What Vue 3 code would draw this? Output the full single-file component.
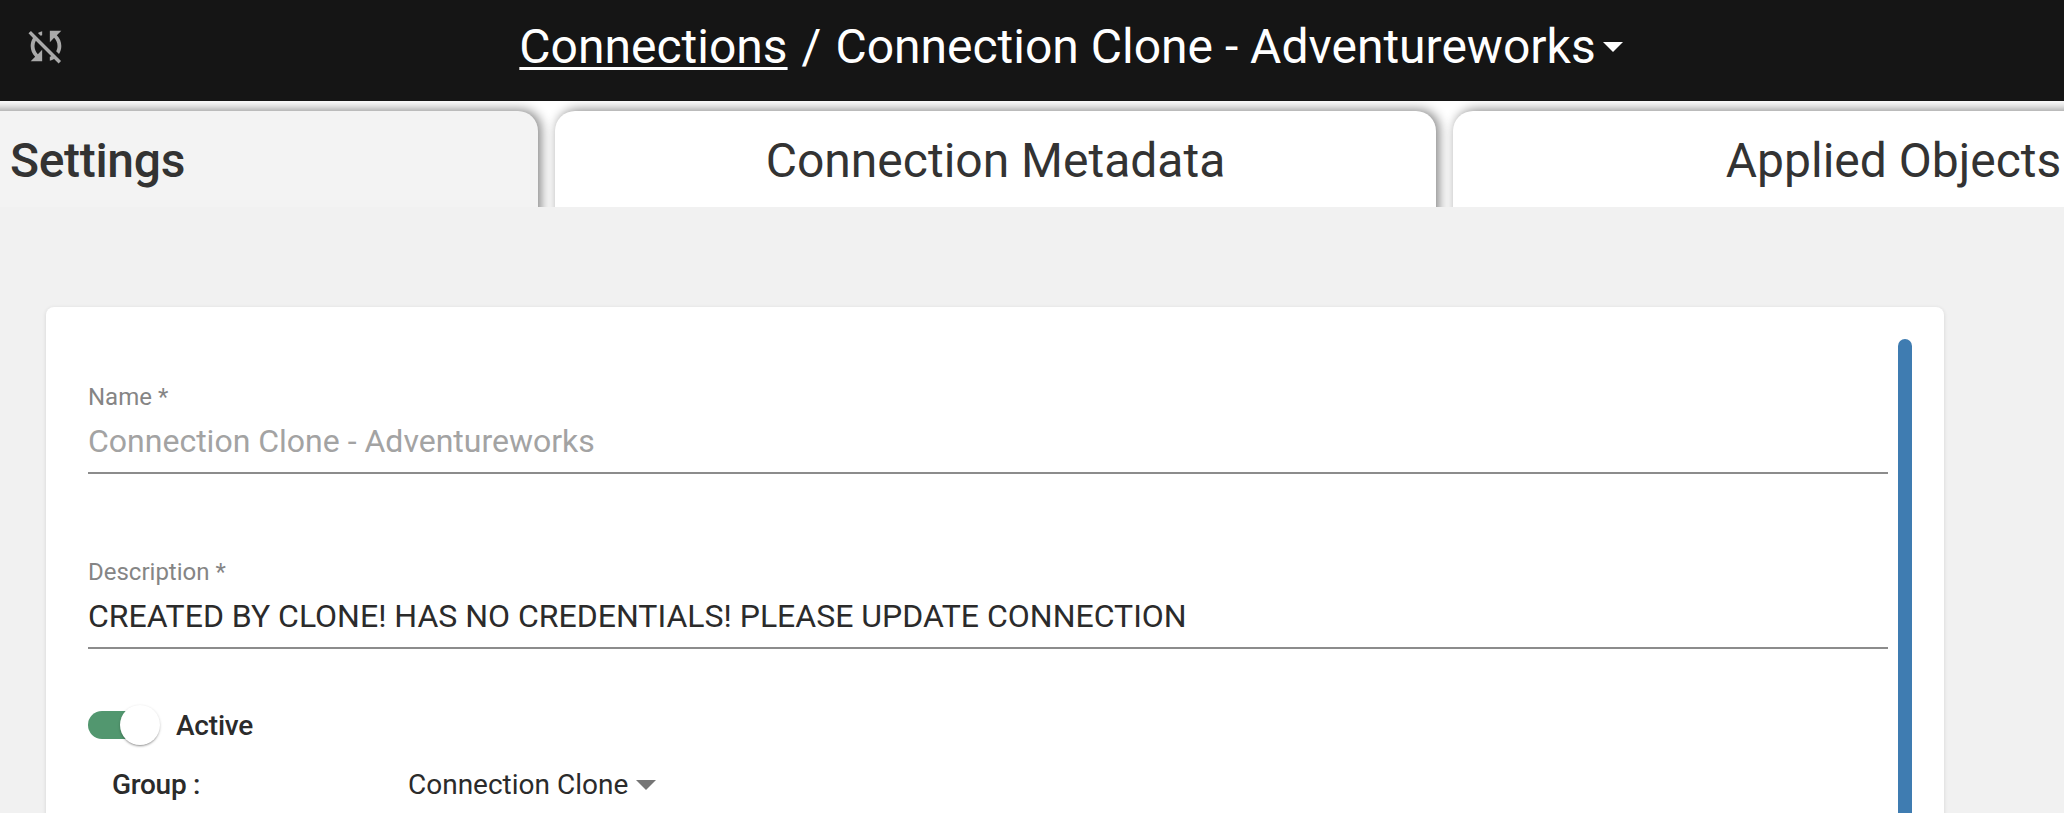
<script setup>
const tabs = [
  { label: 'Settings', active: true },
  { label: 'Connection Metadata', active: false },
  { label: 'Applied Objects', active: false }
]
</script>

<template>
  <div class="page">
    <header class="topbar">
      <svg class="sync" viewBox="0 0 24 24" aria-hidden="true">
        <path d="M10 6.35V4.26c-.8.21-1.55.54-2.23.96l1.46 1.46c.25-.12.5-.24.77-.33zm-7.14-.94l2.36 2.36C4.45 8.99 4 10.44 4 12c0 2.21.91 4.2 2.36 5.64L4 20h6v-6l-2.24 2.24C6.68 15.15 6 13.66 6 12c0-1 .25-1.94.68-2.77l8.08 8.08c-.25.13-.5.25-.77.34v2.09c.8-.21 1.55-.54 2.23-.96l2.36 2.36 1.27-1.27L4.14 4.14 2.86 5.41zM20 4h-6v6l2.24-2.24C17.32 8.85 18 10.34 18 12c0 1-.25 1.94-.68 2.77l1.46 1.46C19.55 15.01 20 13.56 20 12c0-2.21-.91-4.2-2.36-5.64L20 4z" />
      </svg>
      <div class="crumbs">
        <a class="crumb-link">Connections</a>
        <span class="sep">/</span>
        <span>Connection Clone - Adventureworks</span>
        <span class="crumb-caret"></span>
      </div>
    </header>

    <nav class="tabs">
      <div v-for="t in tabs" :key="t.label" class="tab" :class="{ active: t.active }">{{ t.label }}</div>
    </nav>

    <main class="content">
      <section class="card">
        <div class="form">
          <div class="field first">
            <label class="field-label">Name *</label>
            <div class="field-value muted">Connection Clone - Adventureworks</div>
          </div>
          <div class="field second">
            <label class="field-label">Description *</label>
            <div class="field-value">CREATED BY CLONE! HAS NO CREDENTIALS! PLEASE UPDATE CONNECTION</div>
          </div>
          <div class="switch-row">
            <span class="switch"><span class="track"></span><span class="thumb"></span></span>
            <span class="switch-label">Active</span>
          </div>
          <div class="group-row">
            <span class="group-label">Group :</span>
            <span class="group-value">Connection Clone</span>
            <span class="group-caret"></span>
          </div>
        </div>
        <div class="scrollbar"></div>
      </section>
    </main>
  </div>
</template>

<style scoped>
.page {
  width: 2064px;
  height: 813px;
  overflow: hidden;
  background: #f1f1f1;
  font-family: Roboto, "Liberation Sans", sans-serif;
  display: flex;
  flex-direction: column;
}
.topbar {
  height: 101px;
  flex: none;
  background: #151515;
  color: #fff;
  display: flex;
  align-items: center;
  justify-content: center;
  position: relative;
  padding-left: 78px;
  box-sizing: border-box;
}
.sync {
  position: absolute;
  left: 23px;
  top: 23px;
  width: 46px;
  height: 46px;
  fill: #aaa;
}
.crumbs {
  display: flex;
  align-items: center;
  font-size: 48px;
  font-weight: 400;
  line-height: 92px;
  margin-top: -8px;
}
.crumb-link {
  text-decoration: underline;
  text-underline-offset: 4px;
  text-decoration-thickness: 3px;
}
.sep {
  margin: 0 14px;
}
.crumb-caret {
  width: 0;
  height: 0;
  margin-left: 7px;
  margin-top: 1px;
  border-left: 10px solid transparent;
  border-right: 10px solid transparent;
  border-top: 10px solid #fff;
}
.tabs {
  height: 106px;
  flex: none;
  background: #fff;
  overflow: hidden;
  display: flex;
  gap: 17px;
  padding-top: 10px;
  box-sizing: border-box;
}
.tab {
  flex: none;
  width: 881px;
  height: 120px;
  background: #fff;
  border-radius: 20px 20px 0 0;
  box-shadow: 3px -1px 12px #808080;
  color: #333;
  font-size: 48px;
  line-height: 100px;
  text-align: center;
}
.tab.active {
  margin-left: -343px;
  background: #f3f3f3;
  font-weight: 500;
  letter-spacing: -0.3px;
}
.content {
  flex: 1;
  padding: 100px 120px 0 46px;
  min-height: 0;
}
.card {
  background: #fff;
  border-radius: 8px;
  box-shadow: 0 1px 4px rgba(0, 0, 0, 0.12);
  height: 600px;
  position: relative;
  padding: 0 56px 0 42px;
}
.field {
  border-bottom: 2px solid #8c8c8c;
}
.field.first {
  padding-top: 75px;
}
.field.second {
  margin-top: 83px;
}
.field-label {
  display: block;
  font-size: 24px;
  line-height: 30px;
  color: #858585;
}
.field-value {
  font-size: 32px;
  line-height: 44px;
  padding: 7px 0 9px;
  color: #2b2b2b;
}
.field-value.muted {
  color: #a3a3a3;
}
.switch-row {
  display: flex;
  align-items: center;
  margin-top: 56px;
  height: 40px;
}
.switch {
  position: relative;
  width: 72px;
  height: 40px;
  flex: none;
}
.track {
  position: absolute;
  left: 0;
  top: 6px;
  width: 68px;
  height: 28px;
  border-radius: 14px;
  background: #52976f;
}
.thumb {
  position: absolute;
  left: 32px;
  top: 0;
  width: 40px;
  height: 40px;
  border-radius: 50%;
  background: #fff;
  box-shadow: 0 2px 2px -1px rgba(0, 0, 0, 0.3), 0 1px 3px rgba(0, 0, 0, 0.2);
}
.switch-label {
  margin-left: 16px;
  font-size: 28px;
  font-weight: 500;
  letter-spacing: -0.2px;
  color: #2b2b2b;
}
.group-row {
  display: flex;
  align-items: center;
  margin-top: 23px;
  padding-left: 24px;
  font-size: 28px;
  color: #2b2b2b;
}
.group-label {
  width: 296px;
  font-weight: 500;
  letter-spacing: -0.3px;
}
.group-caret {
  width: 0;
  height: 0;
  margin-left: 8px;
  border-left: 10px solid transparent;
  border-right: 10px solid transparent;
  border-top: 10px solid #757575;
}
.scrollbar {
  position: absolute;
  left: 1852px;
  top: 32px;
  width: 14px;
  height: 600px;
  border-radius: 7px;
  background: #3f7cb1;
}
</style>

<style>
html, body { margin: 0; overflow: hidden; }
</style>
